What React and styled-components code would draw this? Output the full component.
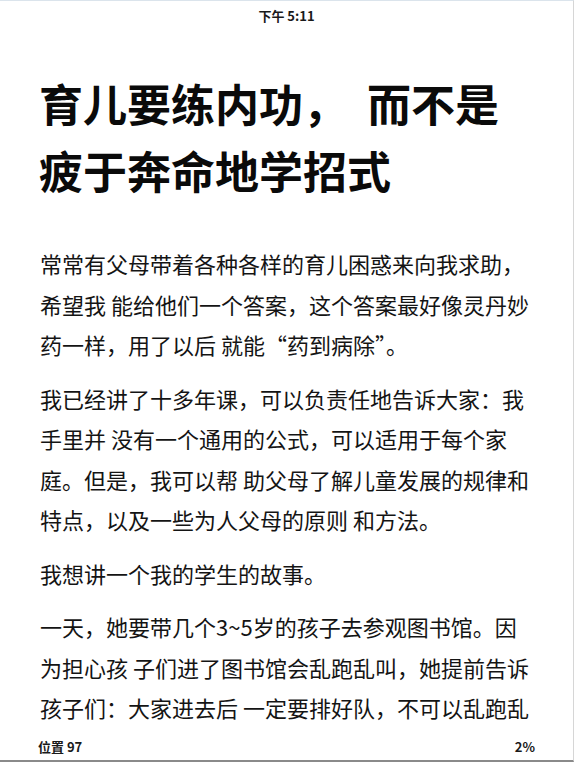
import React from "react";
import styled, { createGlobalStyle } from "styled-components";

const Global = createGlobalStyle`
  html, body { margin: 0; padding: 0; background: #ffffff; }
  body { font-family: "Noto Sans CJK SC", "Noto Sans", sans-serif; color: #111; }
  * { box-sizing: border-box; }
`;

const Page = styled.div`
  width: 574px;
  height: 762px;
  display: flex;
  flex-direction: column;
  background: #fff;
  border-top: 1px solid #dbe4ec;
  border-right: 1px solid #d6d6d6;
  border-bottom: 2px solid #8a8a8a;
  overflow: hidden;
`;

const StatusBar = styled.div`
  height: 29px;
  display: flex;
  align-items: center;
  justify-content: center;
  font-size: 13px;
  font-weight: 700;
  color: #1a1a1a;
`;

const Title = styled.h1`
  margin: 40px 0 0;
  padding: 0 38px 0 39px;
  font-size: 44px;
  font-weight: 700;
  line-height: 67px;
  color: #0a0a0a;
`;

const TitleLine = styled.span`
  display: block;
  white-space: pre;
`;

const TitleGap = styled.span`
  display: inline-block;
  width: 20px;
`;

const Body = styled.div`
  margin-top: 39px;
  padding: 0 38px 0 40px;
  font-size: 22px;
  line-height: 40.5px;
  color: #141414;
`;

const Para = styled.p`
  margin: 0 0 13px;
  &:last-child { margin-bottom: 0; }
`;

const Line = styled.span`
  display: block;
  white-space: pre;
`;

const Footer = styled.div`
  margin-top: auto;
  display: flex;
  justify-content: space-between;
  align-items: center;
  padding: 0 38px 5px 38px;
  font-size: 13px;
  line-height: 16px;
  font-weight: 700;
  color: #1a1a1a;
`;

const paragraphs = [
  [
    "常常有父母带着各种各样的育儿困惑来向我求助，",
    "希望我 能给他们一个答案，这个答案最好像灵丹妙",
    "药一样，用了以后 就能“药到病除”。",
  ],
  [
    "我已经讲了十多年课，可以负责任地告诉大家：我",
    "手里并 没有一个通用的公式，可以适用于每个家",
    "庭。但是，我可以帮 助父母了解儿童发展的规律和",
    "特点，以及一些为人父母的原则 和方法。",
  ],
  ["我想讲一个我的学生的故事。"],
  [
    "一天，她要带几个3~5岁的孩子去参观图书馆。因",
    "为担心孩 子们进了图书馆会乱跑乱叫，她提前告诉",
    "孩子们：大家进去后 一定要排好队，不可以乱跑乱",
  ],
];

export default function App() {
  return (
    <>
      <Global />
      <Page>
        <StatusBar>下午 5:11</StatusBar>
        <Title>
          <TitleLine>
            育儿要练内功，<TitleGap />而不是
          </TitleLine>
          <TitleLine>疲于奔命地学招式</TitleLine>
        </Title>
        <Body>
          {paragraphs.map((p, i) => (
            <Para key={i}>
              {p.map((l, j) => (
                <Line key={j}>{l}</Line>
              ))}
            </Para>
          ))}
        </Body>
        <Footer>
          <span>位置 97</span>
          <span>2%</span>
        </Footer>
      </Page>
    </>
  );
}
